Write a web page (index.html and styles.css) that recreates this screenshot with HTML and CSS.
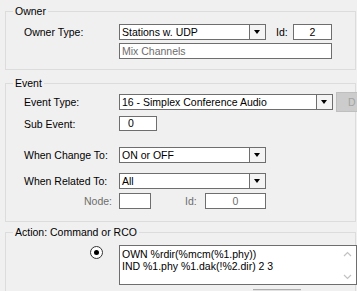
FILE: index.html
```html
<!DOCTYPE html>
<html lang="en">

<head>
    <meta charset="UTF-8">
    <meta name="viewport" content="width=device-width, initial-scale=1.0">
    <title>Event Properties</title>
    <link rel="stylesheet" href="styles.css">
</head>

<body>
    <div id="panel">
        <fieldset class="group owner">
            <legend>Owner</legend>
            <div class="inner">
                <div class="row first">
                    <span class="lbl">Owner Type:</span>
                    <div class="combo w147"><span class="val">Stations w. UDP</span><span class="drop"></span></div>
                    <span class="id-lbl">Id:</span>
                    <div class="edit center w39">2</div>
                </div>
                <div class="row mix">
                    <span class="lbl"></span>
                    <div class="edit grey w213">Mix Channels</div>
                </div>
            </div>
        </fieldset>

        <fieldset class="group event">
            <legend>Event</legend>
            <div class="inner">
                <div class="row type">
                    <span class="lbl">Event Type:</span>
                    <div class="combo w214"><span class="val">16 - Simplex Conference Audio</span><span class="drop"></span></div>
                    <div class="btn-off">D</div>
                </div>
                <div class="row sub">
                    <span class="lbl">Sub Event:</span>
                    <div class="edit short w38">0</div>
                </div>
                <div class="row change">
                    <span class="lbl">When Change To:</span>
                    <div class="combo w147"><span class="val">ON or OFF</span><span class="drop"></span></div>
                </div>
                <div class="row related">
                    <span class="lbl">When Related To:</span>
                    <div class="combo w147"><span class="val">All</span><span class="drop"></span></div>
                </div>
                <div class="row node">
                    <span class="lbl off">Node:</span>
                    <div class="edit w32"></div>
                    <span class="id-lbl off node-id">Id:</span>
                    <div class="edit center grey w61">0</div>
                </div>
            </div>
        </fieldset>

        <fieldset class="group action">
            <legend>Action: Command or RCO</legend>
            <div class="inner">
                <div class="row cmd">
                    <span class="radio"><span class="dot"></span></span>
                    <div class="memo">
                        <div class="memo-text">OWN %rdir(%mcm(%1.phy))<br>IND %1.phy %1.dak(!%2.dir) 2 3</div>
                        <div class="scroll">
                            <svg width="17" height="38" viewBox="0 0 17 38">
                                <path d="M5 10 L8.5 6.5 L12 10" fill="none" stroke="#c2c2c2" stroke-width="1.2"/>
                                <path d="M5 29 L8.5 32.5 L12 29" fill="none" stroke="#c2c2c2" stroke-width="1.2"/>
                            </svg>
                        </div>
                    </div>
                </div>
                <div class="row tail">
                    <div class="btn-edge"></div>
                </div>
            </div>
        </fieldset>
    </div>
</body>

</html>
```

FILE: styles.css
```css
html,
body {
    margin: 0;
    height: 100%;
    overflow: hidden;
}

body {
    font-family: "Liberation Sans", Arial, sans-serif;
    font-size: 10.5px;
    color: #000;
    background-color: #f0f0f0;
}

#panel {
    width: 357px;
}

.group {
    box-sizing: border-box;
    width: 351px;
    margin: 0 0 0 5px;
    padding: 0;
    border: 1px solid #dcdcdc;
    min-width: 0;
}

.group legend {
    height: 14px;
    line-height: 14px;
    margin-left: 7px;
    padding: 0 2px;
}

.owner {
    margin-top: 4px;
    padding-bottom: 10px;
}

.event {
    margin-top: 6px;
    padding-bottom: 12px;
}

.action {
    margin-top: 3px;
    height: 80px;
}

.inner {
    padding-left: 18px;
}

.row {
    display: flex;
    align-items: center;
    white-space: nowrap;
}

.lbl {
    width: 95px;
    flex: none;
}

.lbl.off,
.id-lbl.off {
    color: #6d6d6d;
}

.node .lbl {
    box-sizing: border-box;
    text-align: right;
    padding-right: 7px;
}

.id-lbl {
    width: 17px;
    margin-left: 10px;
    flex: none;
}

.node-id {
    width: 20px;
    margin-left: 34px;
}

/* spacing between rows */
.first { margin-top: 6px; }
.mix { margin-top: 3px; }
.type { margin-top: 2px; height: 20px; }
.sub { margin-top: 4px; }
.change { margin-top: 16px; }
.related { margin-top: 10px; }
.node { margin-top: 4px; }
.cmd { margin-top: 6px; align-items: flex-start; }
.tail { margin-top: 4px; }

.combo,
.edit {
    box-sizing: border-box;
    height: 16px;
    line-height: 14px;
    border: 1px solid #6e6e6e;
    background-color: #fff;
    flex: none;
}

.combo {
    display: flex;
}

.combo .val {
    flex: 1;
    padding-left: 2px;
    overflow: hidden;
}

.combo .drop {
    width: 15px;
    border-left: 1px solid #6e6e6e;
    background-color: #f4f4f4;
    position: relative;
}

.combo .drop::after {
    content: "";
    position: absolute;
    left: 4px;
    top: 5px;
    border-left: 3.5px solid transparent;
    border-right: 3.5px solid transparent;
    border-top: 4px solid #000;
}

.edit {
    padding-left: 2px;
}

.edit.center {
    text-align: center;
    padding-left: 0;
}

.edit.short {
    height: 15px;
    line-height: 13px;
    padding-left: 8px;
}

.edit.grey {
    color: #6d6d6d;
}

.w32 { width: 32px; }
.w38 { width: 38px; }
.w39 { width: 39px; }
.w61 { width: 61px; }
.w147 { width: 147px; }
.w213 { width: 213px; }
.w214 { width: 214px; }

.btn-off {
    box-sizing: border-box;
    width: 22px;
    height: 20px;
    line-height: 18px;
    margin-left: 3px;
    padding-left: 11px;
    border: 1px solid #bfbfbf;
    background-color: #cccccc;
    color: #a3a3a3;
    flex: none;
}

.radio {
    box-sizing: border-box;
    width: 13px;
    height: 13px;
    margin: 1px 0 0 66px;
    border: 1px solid #333;
    border-radius: 50%;
    background-color: #fff;
    display: flex;
    align-items: center;
    justify-content: center;
    flex: none;
}

.radio .dot {
    width: 5px;
    height: 5px;
    border-radius: 50%;
    background-color: #000;
}

.memo {
    box-sizing: border-box;
    width: 238px;
    height: 40px;
    margin-left: 16px;
    border: 1px solid #6e6e6e;
    background-color: #fff;
    display: flex;
    flex: none;
}

.memo-text {
    flex: 1;
    padding: 2px 0 0 2px;
    line-height: 12px;
}

.scroll {
    width: 17px;
    height: 38px;
    overflow: hidden;
}

.btn-edge {
    width: 48px;
    height: 10px;
    margin-left: 229px;
    border-top: 1px solid #adadad;
    background-color: #e1e1e1;
}
```
